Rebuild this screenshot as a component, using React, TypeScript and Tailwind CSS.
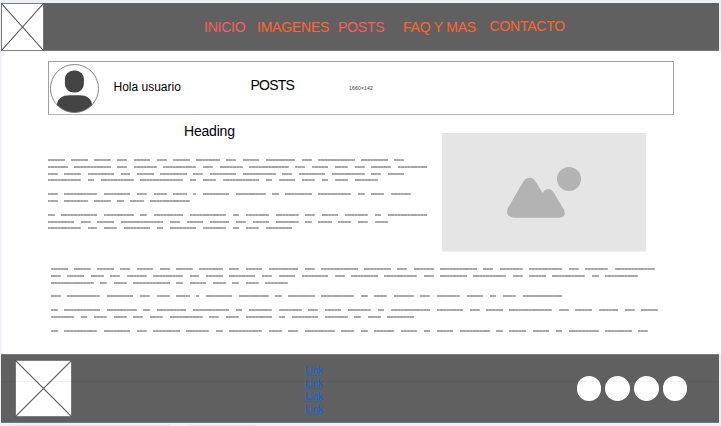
import React from "react";

const CHAR = 3.3;

const intro = [
  [
    [5, 5, 5, 3, 5, 3, 5, 7, 3, 5, 9, 3, 11, 8, 3],
    [6, 11, 3, 7, 10, 3, 7, 12, 3, 5, 4, 3, 6, 9],
    [3, 5, 8, 3, 5, 8, 3, 8, 10, 3, 8, 10, 3, 5],
    [10, 2, 10, 13, 2, 4, 11, 2, 5, 4, 2, 4, 7],
  ],
  [
    [3, 10, 8, 3, 4, 4, 1, 8, 9, 2, 8, 10, 2, 4, 6],
    [3, 7, 5, 2, 4, 12],
  ],
  [
    [2, 11, 9, 2, 9, 11, 2, 7, 7, 3, 5, 7, 2, 12],
    [8, 3, 5, 13, 3, 5, 6, 3, 5, 7, 2, 4, 4, 3, 4],
    [10, 3, 4, 8, 2, 8, 7, 2, 4, 8],
  ],
];

const article = [
  [
    [5, 5, 5, 3, 5, 3, 5, 7, 3, 5, 9, 3, 11, 8, 3, 6, 11, 3, 7, 10, 3, 7, 12],
    [3, 5, 4, 3, 6, 9, 3, 5, 8, 3, 5, 8, 3, 8, 10, 3, 8, 10, 3, 5, 10, 2, 10],
    [13, 2, 4, 11, 2, 5, 4, 2, 4, 7],
  ],
  [[3, 10, 8, 3, 4, 4, 1, 8, 9, 2, 8, 10, 2, 4, 6, 3, 7, 5, 2, 4, 12]],
  [
    [2, 11, 9, 2, 9, 11, 2, 7, 7, 3, 5, 7, 2, 12, 8, 3, 5, 13, 3, 5, 6, 3, 5],
    [7, 2, 4, 4, 3, 4, 10, 3, 4, 8, 2, 8, 7, 2, 4, 8],
  ],
  [[2, 10, 8, 3, 8, 7, 2, 10, 4, 3, 9, 4, 2, 6, 5, 2, 5, 9, 2, 5, 5, 2, 9, 8, 3]],
];

// Each number is the length in characters of one greeked word.
function Greeked({ paragraphs }: { paragraphs: number[][][] }) {
  return (
    <div className="flex flex-col gap-[11.8px]">
      {paragraphs.map((lines, p) => (
        <div key={p} className="flex flex-col gap-[4.8px]">
          {lines.map((words, l) => (
            <div key={l} className="flex h-[2px] gap-[6.6px]">
              {words.map((n, w) => (
                <span
                  key={w}
                  className="h-[2px] shrink-0 bg-[repeating-linear-gradient(90deg,#a6a6a6_0,#a6a6a6_2.5px,#b6b6b6_2.5px,#b6b6b6_3.3px)]"
                  style={{ width: n * CHAR }}
                />
              ))}
            </div>
          ))}
        </div>
      ))}
    </div>
  );
}

function CrossBox({ className }: { className: string }) {
  return (
    <svg className={className} viewBox="0 0 100 100" preserveAspectRatio="none">
      <rect width="100" height="100" fill="#fff" />
      <path d="M0 0L100 100M100 0L0 100" stroke="#555" strokeWidth="1.1" vectorEffect="non-scaling-stroke" />
      <rect width="100" height="100" fill="none" stroke="#555" strokeWidth="1.6" vectorEffect="non-scaling-stroke" />
    </svg>
  );
}

export default function App() {
  return (
    <div className="flex h-[426px] w-[721px] flex-col overflow-hidden bg-[#ebf0f7] pl-px pt-[3px] font-['Liberation_Sans',Arial,sans-serif] text-black">
      <header className="flex h-12 w-[718px] shrink-0 border-b border-[#777] bg-[#606060]">
        <CrossBox className="h-12 w-[43px] shrink-0" />
        <nav className="flex pl-[160px] pt-[14px] text-[14px] leading-5 tracking-[-0.22px] whitespace-nowrap text-[#ff662e]">
          <a className="w-[53px] text-[#f95f5b]">INICIO</a>
          <a className="w-[81px]">IMAGENES</a>
          <a className="w-[65px] text-[#f95f5b]">POSTS</a>
          <a className="w-[86.5px]">FAQ Y MAS</a>
          <a className="-mt-px">CONTACTO</a>
        </nav>
      </header>

      <main className="flex h-[303px] shrink-0 flex-col border-l border-[#f5f6fa] bg-white pl-[46px] pt-[10px]">
        <section className="flex h-[54px] w-[626px] shrink-0 border border-[#a0a0a0] border-b-[#b5b5b5]">
          <svg className="ml-px mt-[2px] h-[49px] w-[50px] shrink-0" viewBox="0 0 50 49">
            <defs>
              <clipPath id="avatar">
                <circle cx="24.5" cy="24.5" r="24" />
              </clipPath>
            </defs>
            <g clipPath="url(#avatar)" fill="#444">
              <rect x="14.9" y="6.5" width="19" height="22" rx="8.7" />
              <path d="M6.5 44C6.5 34 12.5 31.2 19.5 31.2H29.5C36.5 31.2 42.5 34 42.5 44V49H6.5Z" />
            </g>
            <circle cx="24.5" cy="24.5" r="24" fill="none" stroke="#777" strokeWidth="0.9" />
          </svg>
          <p className="w-[137px] shrink-0 pl-[13.5px] pt-[17px] text-[12px] leading-4">Hola usuario</p>
          <p className="w-[112px] shrink-0 pl-[13.5px] pt-[13px] text-[14px] leading-5 tracking-[-0.75px]">POSTS</p>
          <p className="pt-[21px] text-[5px] leading-[10px] tracking-[0.2px] text-[#333]">1660×142</p>
        </section>

        <div className="flex h-[148px] shrink-0">
          <div className="w-[394px]">
            <h1 className="h-[44px] pl-[136px] pt-[6px] text-[14px] leading-5 tracking-[-0.2px]">Heading</h1>
            <Greeked paragraphs={intro} />
          </div>
          <svg className="mt-[18px] h-[119px] w-[204px]" viewBox="0 0 204 119">
            <rect width="204" height="118.6" fill="#e5e5e5" />
            <g fill="#b3b3b3">
              <circle cx="127" cy="46" r="12" />
              <path d="M66 75L81 49C84 43.3 91 43.3 94 49L100.5 60C104 54.5 109 55 112 60L121.5 76C124.5 81 122 84.7 117 84.7H73C66 84.7 63.5 80 66 75Z" />
            </g>
          </svg>
        </div>

        <div className="pl-[3px] pt-[5px]">
          <Greeked paragraphs={article} />
        </div>
      </main>

      <footer className="relative flex h-[69px] w-[718px] shrink-0 border-y border-[#777] bg-[#606060]">
        <CrossBox className="ml-[14px] mt-[5px] h-[57px] w-[57px] shrink-0" />
        <ul className="ml-[233px] mt-[9px] w-[38px] font-[Roboto,sans-serif] text-[10px] leading-[13px] tracking-[-0.2px] text-[#0b67dd] underline decoration-[#0b67dd]/40">
          <li>Link</li>
          <li>Link</li>
          <li>Link</li>
          <li>Link</li>
        </ul>
        <div className="ml-[233.7px] mt-[21px] flex gap-[4.1px]">
          <span className="size-[24.6px] rounded-full bg-white" />
          <span className="size-[24.6px] rounded-full bg-white" />
          <span className="size-[24.6px] rounded-full bg-white" />
          <span className="size-[24.6px] rounded-full bg-white" />
        </div>
        <span className="absolute inset-x-0 top-[26px] h-px bg-black/5" />
      </footer>
      <div className="mt-[2px] flex h-px gap-[17px] pl-[14px]">
        <span className="w-[155px] bg-[#dfe0e8]" />
        <span className="w-[68px] bg-[#dfe0e8]" />
      </div>
    </div>
  );
}
